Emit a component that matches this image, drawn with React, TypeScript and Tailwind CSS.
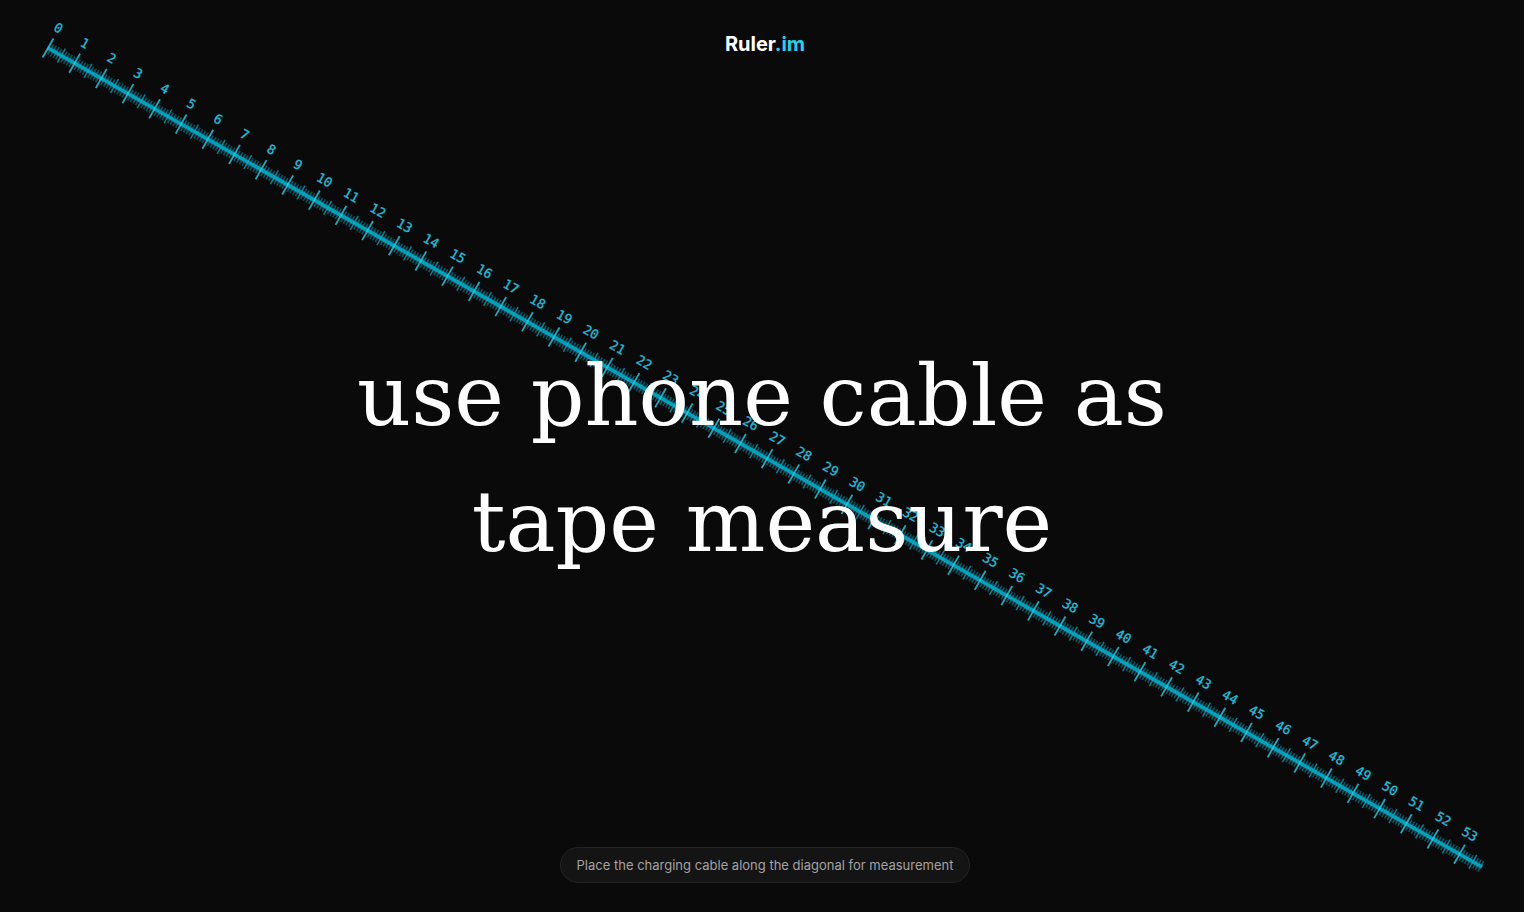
import { useEffect, useState } from "react"

const CM = 30.67

function useViewport() {
  const [size, setSize] = useState({ width: window.innerWidth, height: window.innerHeight })

  useEffect(() => {
    const onResize = () => setSize({ width: window.innerWidth, height: window.innerHeight })
    window.addEventListener("resize", onResize)
    return () => window.removeEventListener("resize", onResize)
  }, [])

  return size
}

function DiagonalRuler() {
  const { width, height } = useViewport()
  const start = { x: 48, y: 48 }
  const dx = width - 42 - start.x
  const dy = height - 45 - start.y
  const length = Math.hypot(dx, dy)
  const angle = (Math.atan2(dy, dx) * 180) / Math.PI
  const ticks = Array.from({ length: Math.floor((length / CM) * 10) + 1 }, (_, mm) => mm)

  return (
    <svg className="absolute inset-0 h-full w-full" aria-hidden="true">
      <g transform={`translate(${start.x} ${start.y}) rotate(${angle})`}>
        <line x1={0} y1={0} x2={length} y2={0} stroke="#06b6d4" strokeWidth={6} opacity={0.2} />
        <line x1={0} y1={0} x2={length} y2={0} stroke="#06b6d4" strokeWidth={3.6} opacity={0.8} />
        {ticks.map((mm) => {
          const x = (mm * CM) / 10
          const major = mm % 10 === 0
          const half = mm % 5 === 0
          const reach = major ? 11 : half ? 8 : 6
          return (
            <line
              key={mm}
              x1={x}
              y1={-reach}
              x2={x}
              y2={reach}
              stroke={major ? "#22d3ee" : "#06b6d4"}
              strokeWidth={major ? 1.8 : 1.5}
              opacity={major ? 0.8 : half ? 0.7 : 0.45}
            />
          )
        })}
        {ticks
          .filter((mm) => mm % 10 === 0)
          .map((mm) => (
            <text
              key={mm}
              x={(mm * CM) / 10 - 1}
              y={-18}
              textAnchor="middle"
              stroke="#22d3ee"
              strokeWidth={0.3}
              opacity={0.9}
              className="fill-[#22d3ee] font-['DejaVu_Sans_Mono',monospace] text-[13px]"
            >
              {mm / 10}
            </text>
          ))}
      </g>
    </svg>
  )
}

export default function App() {
  return (
    <div className="relative flex min-h-screen flex-col items-center justify-between overflow-hidden bg-[#0a0a0a] font-['Inter',sans-serif]">
      <DiagonalRuler />

      <header className="relative pt-7 pl-1.5">
        <a href="/" className="block text-xl leading-8 font-bold text-white">
          Ruler<span className="text-[#22d3ee]">.im</span>
        </a>
      </header>

      <h1 className="relative pt-2.5 text-center font-['DejaVu_Serif',serif] text-[84px] leading-[126px] text-white">
        use phone cable as
        <br />
        tape measure
      </h1>

      <footer className="relative pb-[29px] pl-1.5">
        <p className="rounded-full border border-[#242424] bg-[#141414] px-4 py-2 text-[13px] leading-[18px] text-[#a3a3a3]">
          Place the charging cable along the diagonal for measurement
        </p>
      </footer>
    </div>
  )
}
